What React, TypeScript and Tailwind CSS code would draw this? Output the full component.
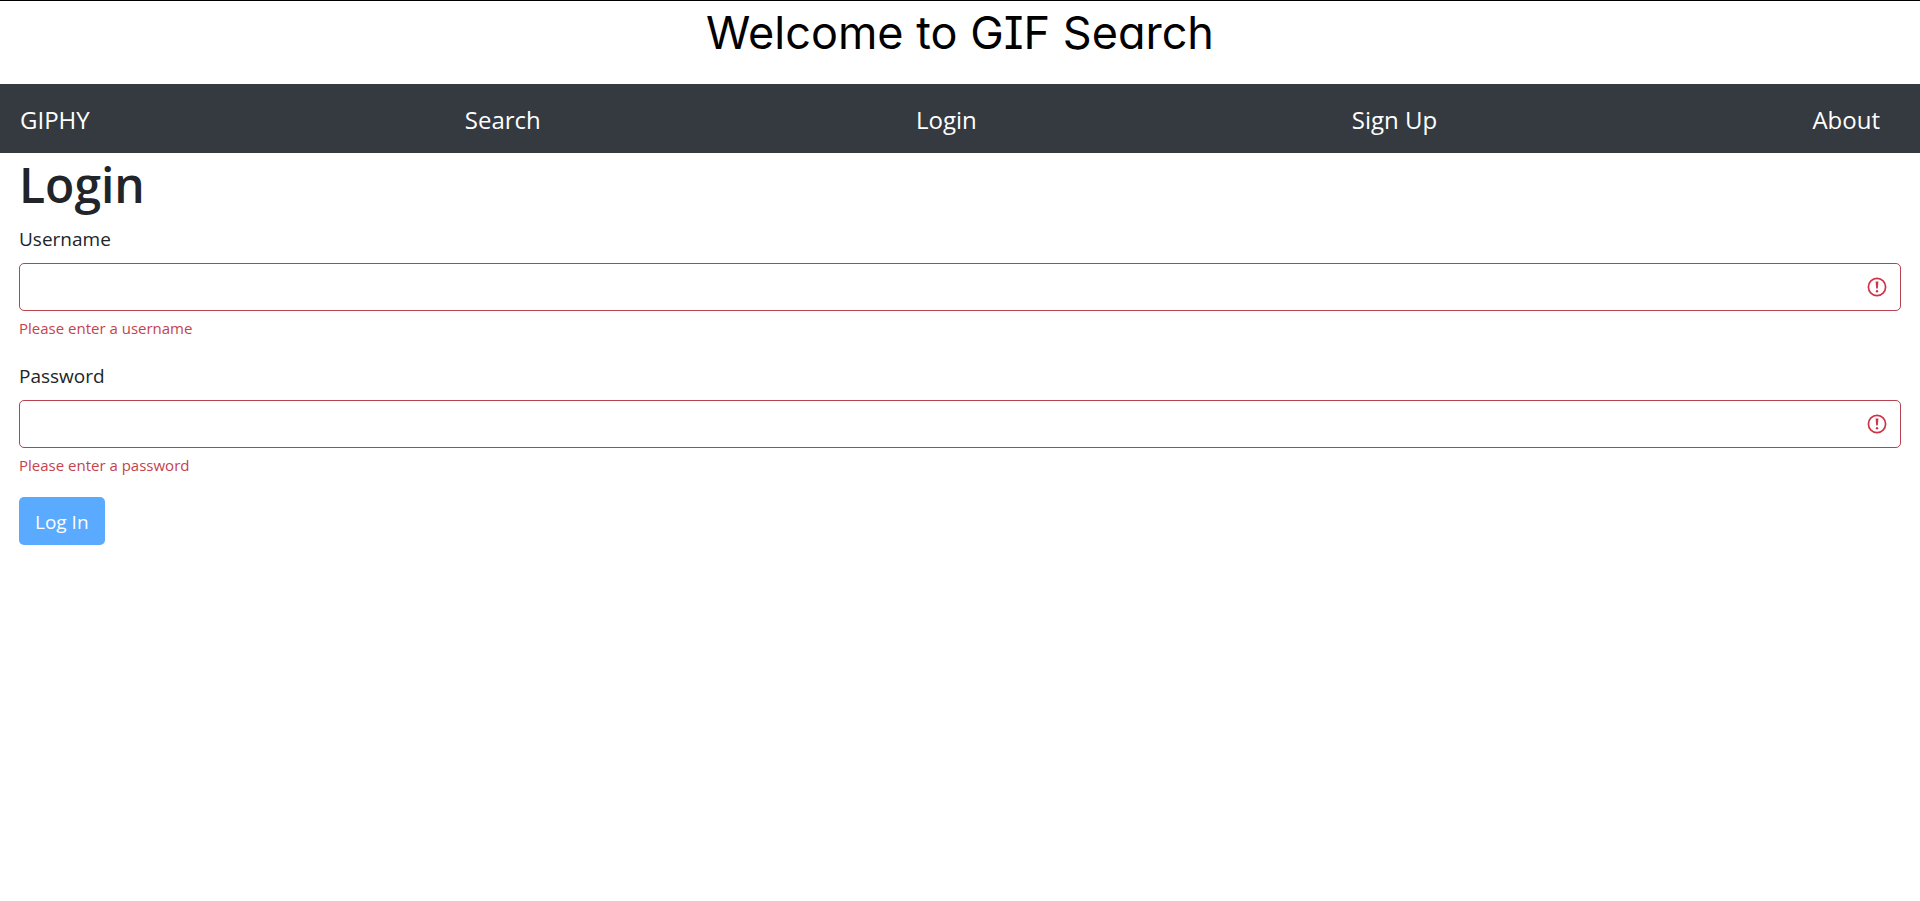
import { useState } from "react";

const links = ["GIPHY", "Search", "Login", "Sign Up", "About"];

function ErrorIcon() {
  return (
    <svg
      viewBox="0 0 20 20"
      fill="none"
      stroke="#cf3347"
      aria-hidden="true"
      className="pointer-events-none absolute right-3.5 top-3.5 size-5"
    >
      <circle cx="10" cy="10" r="8.6" strokeWidth="1.7" />
      <path d="M8.6 4.6h2.8l-.6 7H9.2z" fill="#cf3347" stroke="none" />
      <circle cx="10" cy="14.2" r="1.2" fill="#cf3347" stroke="none" />
    </svg>
  );
}

type FieldProps = {
  id: string;
  label: string;
  type: string;
  error: string;
};

function Field({ id, label, type, error }: FieldProps) {
  const [value, setValue] = useState("");
  return (
    <div className="mb-5">
      <label htmlFor={id} className="mb-[9px] block pt-px text-[19px] leading-[30px]">
        {label}
      </label>
      <div className="relative">
        <input
          id={id}
          type={type}
          value={value}
          onChange={(e) => setValue(e.target.value)}
          aria-invalid="true"
          aria-describedby={`${id}-error`}
          className="block h-12 w-full rounded-[5px] border border-[#b54450] bg-white pl-4 pr-12 text-[19px] outline-none"
        />
        <ErrorIcon />
      </div>
      <p id={`${id}-error`} className="mt-[5px] text-[15px] leading-6 text-[#c4434f]">
        {error}
      </p>
    </div>
  );
}

export default function App() {
  return (
    <div className="min-h-screen border-t border-black bg-white font-['Segoe_UI','Open_Sans',sans-serif] text-[#212529]">
      <header className="pb-5 text-center font-['Comic_Sans_MS','Inter',cursive] text-[45px] leading-[63px] text-black [font-feature-settings:'cv08','cv11']">
        Welcome to GIF Search
      </header>
      <nav className="flex items-center justify-between bg-[#343a40] pb-[15px] pl-5 pr-10 pt-[17px] text-[24px] leading-[37px] text-white">
        {links.map((name) => (
          <a key={name} href="#">
            {name}
          </a>
        ))}
      </nav>
      <main className="px-[19px]">
        <h1 className="mb-2 pt-0.5 text-[48px] font-semibold leading-[60px]">Login</h1>
        <form onSubmit={(e) => e.preventDefault()}>
          <Field id="username" label="Username" type="text" error="Please enter a username" />
          <Field id="password" label="Password" type="password" error="Please enter a password" />
          <button
            type="submit"
            className="h-12 rounded-[5px] bg-[#5aaaff] px-4 pt-0.5 text-[19px] leading-[30px] text-white"
          >
            Log In
          </button>
        </form>
      </main>
    </div>
  );
}
